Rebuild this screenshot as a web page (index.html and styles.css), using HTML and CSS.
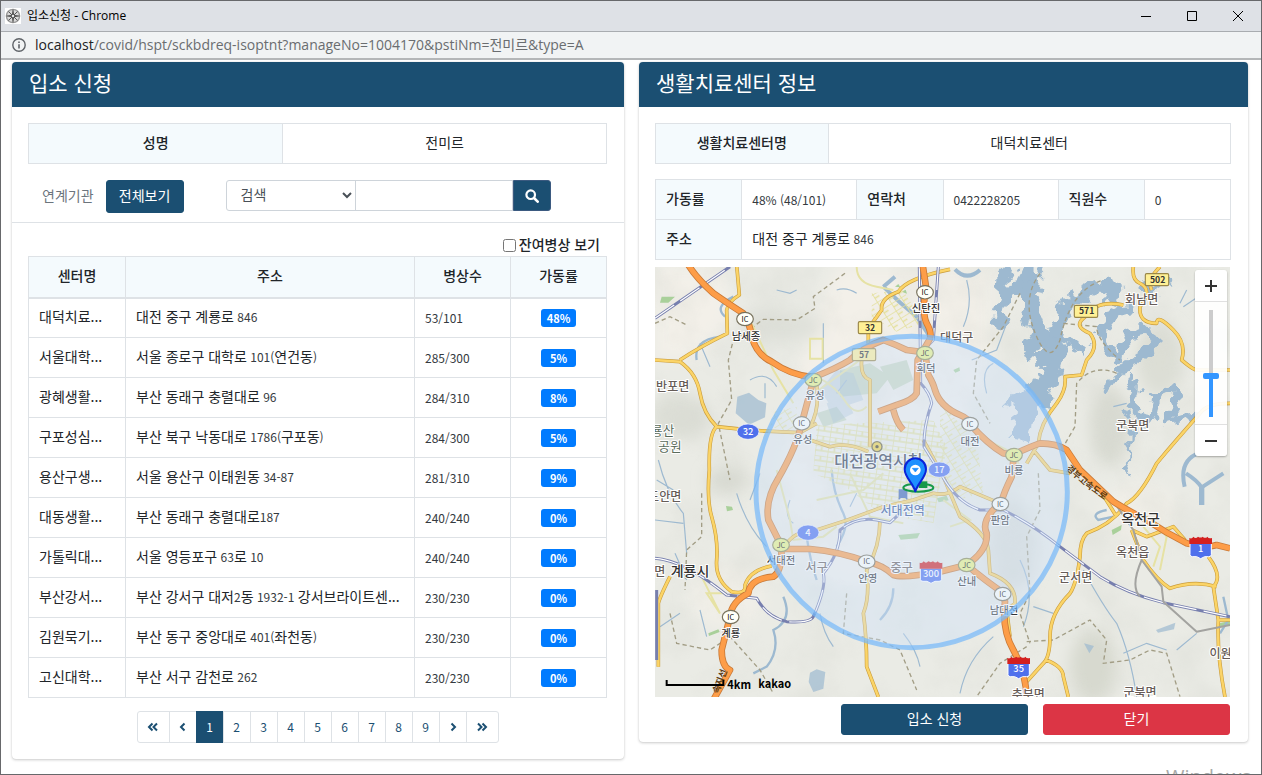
FILE: index.html
```html
<!DOCTYPE html>
<html lang="ko">
<head>
<meta charset="utf-8">
<meta name="viewport" content="width=device-width, initial-scale=1">
<title>입소신청</title>
<link rel="stylesheet" href="styles.css">
</head>
<body>
<div class="window">
  <header class="titlebar">
    <svg class="favicon" viewBox="0 0 16 16" aria-hidden="true">
      <rect width="16" height="16" fill="#fff"/>
      <circle cx="8" cy="8" r="6.600" fill="#d9d9d9" stroke="#9a9a9a" stroke-width="1.400"/>
      <path d="M8 1.500v13M1.500 8h13M3.500 3.500l9 9M12.500 3.500l-9 9" stroke="#555" stroke-width="1"/>
      <path d="M8 2l1.300 4.700L14 8 9.300 9.300 8 14 6.700 9.300 2 8l4.700-1.300z" fill="#555"/>
      <circle cx="8" cy="8" r="1.200" fill="#eee"/>
    </svg>
    <span class="window-title">입소신청 - Chrome</span>
    <div class="window-controls">
      <button type="button" aria-label="최소화"><svg viewBox="0 0 12 12"><path d="M1 6.500h10"/></svg></button>
      <button type="button" aria-label="최대화"><svg viewBox="0 0 12 12"><path d="M1.500 1.500h9v9h-9z"/></svg></button>
      <button type="button" aria-label="창 닫기"><svg viewBox="0 0 12 12"><path d="M1 1l10 10M11 1L1 11"/></svg></button>
    </div>
  </header>
  <div class="addressbar">
    <svg class="info-icon" viewBox="0 0 14 14" aria-hidden="true"><circle cx="7" cy="7" r="6.200" fill="none" stroke="#5f6368" stroke-width="1.400"/><path d="M7 6.200v4.300M7 3.500v1.600" stroke="#5f6368" stroke-width="1.600"/></svg>
    <span class="url"><span class="url-host">localhost</span>/covid/hspt/sckbdreq-isoptnt?manageNo=1004170&amp;pstiNm=전미르&amp;type=A</span>
  </div>

  <main class="content">
    <section class="card">
      <h1 class="card-header">입소 신청</h1>
      <div class="card-body">
        <table class="table person-table">
          <tr><th scope="row">성명</th><td>전미르</td></tr>
        </table>
        <form class="filter">
          <span class="filter-label">연계기관</span>
          <button type="button" class="btn btn-primary">전체보기</button>
          <div class="search-group">
            <select aria-label="검색 조건"><option>검색</option></select>
            <input type="text" aria-label="검색어">
            <button type="button" class="btn-search" aria-label="검색"><svg viewBox="0 0 14 14"><circle cx="5.700" cy="5.700" r="4.300" fill="none" stroke="#fff" stroke-width="2.200"/><path d="M9 9l3.700 3.700" stroke="#fff" stroke-width="2.600" stroke-linecap="round"/></svg></button>
          </div>
        </form>
      </div>
      <div class="card-body list-body">
        <label class="remain"><input type="checkbox"><span>잔여병상 보기</span></label>
        <table class="table list-table">
          <colgroup><col class="c-name"><col class="c-addr"><col class="c-bed"><col class="c-rate"></colgroup>
          <thead><tr><th>센터명</th><th>주소</th><th>병상수</th><th>가동률</th></tr></thead>
          <tbody>
            <tr><td>대덕치료...</td><td>대전 중구 계룡로<span class="num"> 846</span></td><td class="num">53/101</td><td><span class="badge">48%</span></td></tr>
            <tr><td>서울대학...</td><td>서울 종로구 대학로<span class="num"> 101(</span>연건동<span class="num">)</span></td><td class="num">285/300</td><td><span class="badge">5%</span></td></tr>
            <tr><td>광혜생활...</td><td>부산 동래구 충렬대로<span class="num"> 96</span></td><td class="num">284/310</td><td><span class="badge">8%</span></td></tr>
            <tr><td>구포성심...</td><td>부산 북구 낙동대로<span class="num"> 1786(</span>구포동<span class="num">)</span></td><td class="num">284/300</td><td><span class="badge">5%</span></td></tr>
            <tr><td>용산구생...</td><td>서울 용산구 이태원동<span class="num"> 34-87</span></td><td class="num">281/310</td><td><span class="badge">9%</span></td></tr>
            <tr><td>대동생활...</td><td>부산 동래구 충렬대로<span class="num">187</span></td><td class="num">240/240</td><td><span class="badge">0%</span></td></tr>
            <tr><td>가톨릭대...</td><td>서울 영등포구<span class="num"> 63</span>로<span class="num"> 10</span></td><td class="num">240/240</td><td><span class="badge">0%</span></td></tr>
            <tr><td>부산강서...</td><td>부산 강서구 대저<span class="num">2</span>동<span class="num"> 1932-1 </span>강서브라이트센...</td><td class="num">230/230</td><td><span class="badge">0%</span></td></tr>
            <tr><td>김원묵기...</td><td>부산 동구 중앙대로<span class="num"> 401(</span>좌천동<span class="num">)</span></td><td class="num">230/230</td><td><span class="badge">0%</span></td></tr>
            <tr><td>고신대학...</td><td>부산 서구 감천로<span class="num"> 262</span></td><td class="num">230/230</td><td><span class="badge">0%</span></td></tr>
          </tbody>
        </table>
        <nav class="pagination" aria-label="페이지">
          <a href="#" class="edge" aria-label="처음"><svg viewBox="0 0 12 10"><path d="M5.500 1.500L2 5l3.500 3.500M10 1.500L6.500 5 10 8.500"/></svg></a>
          <a href="#" aria-label="이전"><svg viewBox="0 0 12 10"><path d="M7.500 1.500L4 5l3.500 3.500"/></svg></a>
          <a href="#" class="active" aria-current="page">1</a><a href="#">2</a><a href="#">3</a><a href="#">4</a><a href="#">5</a><a href="#">6</a><a href="#">7</a><a href="#">8</a><a href="#">9</a>
          <a href="#" aria-label="다음"><svg viewBox="0 0 12 10"><path d="M4.500 1.500L8 5 4.500 8.500"/></svg></a>
          <a href="#" class="edge" aria-label="마지막"><svg viewBox="0 0 12 10"><path d="M2 1.500L5.500 5 2 8.500M6.500 1.500L10 5 6.500 8.500"/></svg></a>
        </nav>
      </div>
    </section>

    <section class="card">
      <h1 class="card-header">생활치료센터 정보</h1>
      <div class="card-body info-body">
        <table class="table center-table">
          <tr><th scope="row">생활치료센터명</th><td>대덕치료센터</td></tr>
        </table>
        <table class="table detail-table">
          <colgroup><col class="d15"><col class="d20"><col class="d15"><col class="d20"><col class="d15"><col class="d15"></colgroup>
          <tr><th>가동률</th><td class="num">48% (48/101)</td><th>연락처</th><td class="num">0422228205</td><th>직원수</th><td class="num">0</td></tr>
          <tr><th>주소</th><td colspan="5">대전 중구 계룡로<span class="num"> 846</span></td></tr>
        </table>

        <div class="map">
          <svg class="map-canvas" viewBox="15 21 1725 1290" preserveAspectRatio="xMidYMid slice" role="img" aria-label="대전 지도">
            <defs>
              <filter id="soft" x="-30%" y="-30%" width="160%" height="160%"><feGaussianBlur stdDeviation="22"/></filter>
              <filter id="shore" x="-10%" y="-10%" width="120%" height="120%" color-interpolation-filters="sRGB"><feTurbulence type="fractalNoise" baseFrequency="0.03" numOctaves="2" seed="7"/><feDisplacementMap in="SourceGraphic" scale="58" xChannelSelector="R" yChannelSelector="G"/></filter>
              <filter id="relief" x="0" y="0" width="100%" height="100%"><feTurbulence type="fractalNoise" baseFrequency="0.007" numOctaves="4" seed="12"/><feColorMatrix values="0 0 0 0 .68  0 0 0 0 .69  0 0 0 0 .64  1.8 0 0 0 -.72"/></filter>
              <pattern id="grid" width="38" height="30" patternUnits="userSpaceOnUse" patternTransform="rotate(8)"><path d="M0 0H38M0 0V30M19 0V15M0 15H38" stroke="#e4e09c" stroke-width="5" fill="none"/></pattern>
              <pattern id="gridTilt" width="34" height="26" patternUnits="userSpaceOnUse" patternTransform="rotate(-32)"><path d="M0 0H34M0 0V26M0 13H17" stroke="#e4e09c" stroke-width="5" fill="none"/></pattern>
              <g id="ic"><ellipse rx="25" ry="20" fill="#fffff8" stroke="#77715c" stroke-width="3.500"/><text y="8" font-size="22">IC</text></g>
              <g id="jc"><ellipse rx="25" ry="20" fill="#eaf382" stroke="#8a8a52" stroke-width="3.500"/><text y="8" font-size="22">JC</text></g>
              <g id="plate"><rect x="-35" y="-18" width="70" height="36" rx="4" fill="#fff095" stroke="#9a8748" stroke-width="3.500"/></g>
              <g id="oval"><ellipse rx="33" ry="23" fill="#4f70ec" stroke="#fff" stroke-width="2"/></g>
              <g id="shield"><path d="M-32-12h64v34q0 6-8 6H12L0 34l-12-6h-12q-8 0-8-6z" fill="#4f70ec" stroke="#fff" stroke-width="3"/><path d="M-34-10v-18q8 4 12-4 7 8 14 0 8 5 14 0 8 7 14 0 4 7 14 4v18z" fill="#d3201f"/></g>
              <path id="expressway-a" d="M1247 627L1299 674 1385 736"/>
              <path id="expressway-b" d="M205 1302L238 1215"/>
            </defs>
            <rect x="15" y="21" width="1725" height="1290" fill="#eaebe5"/>
            <g filter="url(#soft)">
              <path d="M15 21h200l30 150-100 120L15 300zM560 21h460v330l-260 400-380 10 60-420z" fill="#f3f0e9"/>
              <ellipse cx="620" cy="800" rx="200" ry="180" fill="#f3f0e9"/>
              <ellipse cx="1470" cy="760" rx="110" ry="90" fill="#f1efe8"/>
              <ellipse cx="230" cy="1010" rx="110" ry="90" fill="#f1efe8"/>
              <ellipse cx="1380" cy="500" rx="60" ry="120" fill="#d8dad1"/>
              <ellipse cx="1530" cy="300" rx="70" ry="110" fill="#dcded5"/>
              <ellipse cx="90" cy="470" rx="90" ry="70" fill="#dcded6"/>
              <ellipse cx="1330" cy="1220" rx="70" ry="110" fill="#d7d9cf"/>
              <ellipse cx="400" cy="200" rx="120" ry="50" fill="#dfe1da"/>
              <ellipse cx="1090" cy="860" rx="70" ry="130" fill="#dcded7"/>
              <ellipse cx="230" cy="660" rx="60" ry="40" fill="#d8dad2"/>
            </g>
            <rect x="15" y="21" width="1725" height="1290" filter="url(#relief)" opacity=".4"/>

            <g fill="#bccfb0">
              <path d="M570 330l90-20 60 40-40 50-110 10zM690 320l80-20 20 60-60 30zM500 460l60-20 30 40-70 20z" opacity=".7"/>
            </g>
            <g fill="#a9d09a">
              <path d="M35 110l40 0-20 18-25 0zM228 738l18 2 3 10-18 4zM175 1120l30-12 4 8-32 12zM1385 810l30-15-2 15-25 15zM745 825l65-6-8 16-50 4zM910 330l18-8 2 10-14 6zM1708 1090l32-8v14l-30 4zM860 715l30-8 6 14-30 6zM735 80l10-8 6 10zM755 95l12-6 4 12z"/>
            </g>

            <g fill="none" stroke="#9db9d0" stroke-linejoin="round" filter="url(#shore)">
              <path stroke-width="32" d="M1090 20Q1030 60 1070 95L1050 165 1056 205M1040 90L1160 70"/>
              <path stroke-width="56" d="M1160 20Q1110 70 1150 150 1160 220 1205 280"/>
              <path stroke-width="34" d="M1120 60L1095 110M1165 230L1130 290M1180 330L1220 280"/>
              <path stroke-width="44" d="M1212 270Q1225 140 1295 100 1360 60 1395 95L1385 140"/>
              <path stroke-width="56" d="M1225 240L1210 330Q1180 390 1130 430L1115 540"/>
              <path stroke-width="66" d="M1185 380Q1145 400 1120 460"/>
              <path stroke-width="26" d="M1235 235L1315 270M1130 390L1070 440M1180 430L1210 410M1130 290L1210 295"/>
              <path stroke-width="28" d="M1450 145Q1350 155 1358 230 1370 280 1415 295 1420 220 1470 215 1520 208 1510 250 1470 300 1400 340"/>
              <path stroke-width="20" d="M1400 340L1360 400M1430 350Q1470 370 1450 410 1430 440 1470 470 1510 490 1510 460 1520 400 1560 385 1590 390 1580 430L1550 480 1640 465M1530 420L1500 400"/>
              <path stroke-width="9" d="M1420 440Q1470 520 1430 560 1460 600 1420 640"/>
              <path stroke-width="16" d="M1480 70L1500 100 1560 60"/>
            </g>
            <g fill="#9db9d0">
              <path d="M262 410l35-12 28 22 24 10-4 42-48 22-40-34z" opacity=".7"/>
              <path d="M1518 1110l58-22-4 20-48 10zM480 1238l20-10 26 8-6 50-30 10-14-30zM1302 1150l30 8-14 22z" opacity=".7"/>
              <path d="M560 330l50 10 30 80-90 30-40-60zM530 430l60-20 20 50-60 30z" opacity=".4"/>
            </g>
            <g fill="none" stroke="#9db9d0">
              <path stroke-width="12" d="M700 80Q750 130 800 170L836 225M735 50L700 80M915 28Q950 65 990 30M1608 640Q1640 660 1655 682L1720 640M1604 680Q1585 600 1650 578L1700 570"/>
              <path stroke-width="16" d="M1655 680V735"/>
              <path stroke-width="7" d="M250 110Q190 140 225 170M400 1010Q430 1080 370 1110 390 1170 350 1220L310 1240M470 830Q480 900 500 960M545 630Q550 700 580 760 600 800 560 860M730 985Q730 1040 690 1080M1370 750Q1320 760 1345 780L1390 770M1720 1010L1735 1080 1710 1120M140 300Q130 240 210 230"/>
              <path stroke-width="3.500" d="M25 600Q50 700 100 760L110 880M15 780L100 790M20 660L70 690M260 700Q290 800 350 860M380 90L420 100 440 90M560 90Q590 80 620 100M300 360Q350 330 380 380M345 370V415M520 190V310M75 880L110 960M950 60Q970 130 940 200M965 300L1040 270 1070 190M1010 400Q990 330 1030 310M1390 440L1430 430M1110 900Q1160 1000 1120 1100M1300 930Q1360 1040 1400 1090 1440 1180 1460 1310M1150 1040L1210 1060M1030 1130Q950 1200 930 1300M1420 1180L1490 1150 1550 1170M330 640L300 720M420 720Q400 770 430 790M510 1060Q520 1120 550 1160M760 1120Q800 1170 810 1220M150 1050L170 1130M30 1100L90 1060M1580 1170L1640 1120M590 360L560 400M180 320L150 250M620 700L600 740M1660 100L1600 140M1610 90L1590 130"/>
            </g>

            <g fill="none" stroke="#a29d85" stroke-width="4" stroke-dasharray="13 9">
              <path d="M585 40L490 110 495 145 440 180 340 178 310 200 250 240 235 300 245 420 205 490 240 660M15 190L60 170 110 195"/>
              <path d="M1170 40Q1110 120 1160 230 1200 320 1230 240 1260 90 1360 60M1240 190L1340 200Q1340 240 1410 300M1400 340Q1330 310 1280 370L1275 500 1240 560M1110 100L1060 200 980 300 970 400 1020 490"/>
              <path d="M155 700V830L110 870 105 990M60 1060L80 1150 180 1170 240 1130 330 1230 370 1300M590 1000L580 1120 690 1140 750 1170 800 1290M1165 640L1170 750 1130 830 1140 1000 1110 1060 1140 1150M1130 1145L1210 1140 1320 1080 1370 1140 1360 1210 1440 1200 1500 1170 1550 1180 1590 1310M1130 1160L1050 1210 980 1310"/>
            </g>

            <path d="M500 495L850 480 890 560 850 790 690 760 600 690 490 640z" fill="url(#grid)"/>
            <path d="M665 100L760 90 820 190 740 215 665 170z" fill="url(#gridTilt)"/>
            <path d="M375 455L440 440 440 520 360 500zM870 430L980 540 1000 700 920 720 870 640z" fill="url(#gridTilt)"/>
            <g fill="none" stroke="#e6e2a4" stroke-width="6">
              <path d="M480 236h38v60h-38zM620 20Q620 70 680 80L730 90M305 190L370 330 430 430M500 350Q560 380 590 430 620 470 650 440M630 300L520 380 470 420M380 630L420 780 430 840 520 830 560 800M150 940L210 1060 170 1000 230 1000M500 720L640 690 700 640M600 640L660 770 760 790M880 720L960 780 900 800M1480 800L1530 860 1510 920M1520 790L1550 830 1530 930M1010 540L1090 580 1110 620"/>
            </g>

            <g fill="none" stroke-linejoin="round">
              <path stroke="#c99c3c" stroke-width="11" d="M260 15L268 105Q235 125 230 150L232 220Q150 260 90 300M15 300L90 305Q140 340 150 400 160 460 200 500 330 515 450 518L500 490M200 500Q175 520 178 630 170 720 185 770 205 840 200 900 195 960 245 995 290 1005 285 975 300 930 365 918M900 28Q770 55 745 95 690 115 695 150L655 205V255M635 300Q630 350 660 360V560M655 575Q590 545 540 560L480 540M500 370Q510 450 480 500M1450 20Q1445 60 1470 70 1510 90 1470 140 1465 190 1520 190 1520 160 1570 210 1610 250 1595 300 1630 330 1640 330H1740M1530 20Q1490 60 1505 90M1420 135Q1370 125 1340 140L1300 175Q1270 200 1320 220 1350 260 1310 300L1295 345 1245 350Q1250 390 1220 430 1170 490 1165 550L1130 610M1740 430Q1670 430 1650 460 1570 550 1520 610 1470 710 1430 730 1390 790 1310 820 1290 840 1290 890 1280 970 1260 1000 1200 1060 1200 1130 1200 1190 1180 1210L1130 1265M1188 1200Q1240 1220 1240 1250L1255 1311M1445 810L1480 900Q1520 960 1560 985 1630 960 1700 980M1675 890Q1720 950 1690 980L1705 1080Q1700 1180 1725 1311M1445 810L1490 830 1570 800 1605 840M1350 690L1400 770M60 950Q30 1010 25 1030V1220M410 850Q440 810 500 810 600 780 700 740L790 720 850 700Q890 710 930 680L1050 730M690 780Q690 860 650 930 660 1010 640 1060 650 1130 650 1220L685 1311M820 540L880 650 930 770Q1010 820 1015 870L1020 940Q1100 970 1095 1030L1070 1050 1080 1130M1150 570L1200 630 1260 640M1705 1080H1740"/>
              <path stroke="#fbd467" stroke-width="7.500" d="M260 15L268 105Q235 125 230 150L232 220Q150 260 90 300M15 300L90 305Q140 340 150 400 160 460 200 500 330 515 450 518L500 490M200 500Q175 520 178 630 170 720 185 770 205 840 200 900 195 960 245 995 290 1005 285 975 300 930 365 918M900 28Q770 55 745 95 690 115 695 150L655 205V255M635 300Q630 350 660 360V560M655 575Q590 545 540 560L480 540M500 370Q510 450 480 500M1450 20Q1445 60 1470 70 1510 90 1470 140 1465 190 1520 190 1520 160 1570 210 1610 250 1595 300 1630 330 1640 330H1740M1530 20Q1490 60 1505 90M1420 135Q1370 125 1340 140L1300 175Q1270 200 1320 220 1350 260 1310 300L1295 345 1245 350Q1250 390 1220 430 1170 490 1165 550L1130 610M1740 430Q1670 430 1650 460 1570 550 1520 610 1470 710 1430 730 1390 790 1310 820 1290 840 1290 890 1280 970 1260 1000 1200 1060 1200 1130 1200 1190 1180 1210L1130 1265M1188 1200Q1240 1220 1240 1250L1255 1311M1445 810L1480 900Q1520 960 1560 985 1630 960 1700 980M1675 890Q1720 950 1690 980L1705 1080Q1700 1180 1725 1311M1445 810L1490 830 1570 800 1605 840M1350 690L1400 770M60 950Q30 1010 25 1030V1220M410 850Q440 810 500 810 600 780 700 740L790 720 850 700Q890 710 930 680L1050 730M690 780Q690 860 650 930 660 1010 640 1060 650 1130 650 1220L685 1311M820 540L880 650 930 770Q1010 820 1015 870L1020 940Q1100 970 1095 1030L1070 1050 1080 1130M1150 570L1200 630 1260 640M1705 1080H1740"/>
              <path stroke="#777fae" stroke-width="9" d="M15 175L240 20M808 20L812 370Q840 400 845 430 820 500 822 560L890 670Q930 730 990 750H1060Q1150 795 1230 860L1350 950Q1430 1000 1540 1028L1740 1070M865 20L850 240 812 280M15 895Q100 900 230 1005L320 1015Q350 1070 410 1085 480 1090 490 1070 530 980 520 940 570 880 570 810 620 770 680 780L720 788 750 760M20 990V1200"/>
              <path stroke="#fff" stroke-width="3.500" stroke-dasharray="70 22" d="M15 175L240 20M808 20L812 370Q840 400 845 430 820 500 822 560L890 670Q930 730 990 750H1060Q1150 795 1230 860L1350 950Q1430 1000 1540 1028L1740 1070M865 20L850 240 812 280M15 895Q100 900 230 1005L320 1015Q350 1070 410 1085 480 1090 490 1070 530 980 520 940 570 880 570 810 620 770 680 780L720 788 750 760"/>
              <path stroke="#a3a3a0" stroke-width="6" d="M1395 730L1450 810 1475 900Q1440 980 1470 1010M1475 900L1535 980 1540 1025 1640 1115 1740 1095"/>
              <path stroke="#c97a38" stroke-width="20" d="M115 15Q140 55 190 100 240 135 280 160 300 190 305 230 320 285 365 305 420 345 490 352 560 325 600 300 640 262 700 240 740 255 770 270L825 277M818 15L828 80Q815 160 830 190 850 225 835 245L803 300 800 400Q790 420 740 435L685 455M730 450Q740 490 760 510M825 277L835 345Q850 370 855 390 870 440 930 465 955 475 960 492 1010 550 1060 580L1092 583Q1140 560 1170 550 1220 550 1250 570L1290 630 1390 725Q1430 750 1490 780 1550 820 1610 850 1670 865 1700 855L1740 865M490 360L455 490Q440 560 385 655 345 720 355 780L393 855Q400 930 370 950 300 955 295 1000 245 1025 240 1070 230 1110 215 1170 215 1220 240 1230L190 1320M1092 583L1085 650Q1060 700 1055 725 990 780 1010 820 1015 870 950 915L870 935Q760 955 730 945 700 915 650 905 570 875 480 867H393M950 915Q1010 965 1055 995L1065 1025Q1055 1110 1090 1170 1125 1230 1132 1320"/>
              <path stroke="#fd9d48" stroke-width="15" d="M115 15Q140 55 190 100 240 135 280 160 300 190 305 230 320 285 365 305 420 345 490 352 560 325 600 300 640 262 700 240 740 255 770 270L825 277M818 15L828 80Q815 160 830 190 850 225 835 245L803 300 800 400Q790 420 740 435L685 455M730 450Q740 490 760 510M825 277L835 345Q850 370 855 390 870 440 930 465 955 475 960 492 1010 550 1060 580L1092 583Q1140 560 1170 550 1220 550 1250 570L1290 630 1390 725Q1430 750 1490 780 1550 820 1610 850 1670 865 1700 855L1740 865M490 360L455 490Q440 560 385 655 345 720 355 780L393 855Q400 930 370 950 300 955 295 1000 245 1025 240 1070 230 1110 215 1170 215 1220 240 1230L190 1320M1092 583L1085 650Q1060 700 1055 725 990 780 1010 820 1015 870 950 915L870 935Q760 955 730 945 700 915 650 905 570 875 480 867H393M950 915Q1010 965 1055 995L1065 1025Q1055 1110 1090 1170 1125 1230 1132 1320"/>
            </g>

            <g class="map-badges">
              <use href="#ic" x="825" y="97"/><use href="#ic" x="285" y="177"/><use href="#jc" x="490" y="360"/><use href="#jc" x="825" y="279"/>
              <use href="#ic" x="455" y="490"/><use href="#ic" x="960" y="492"/><use href="#jc" x="1092" y="585"/><use href="#ic" x="242" y="1071"/>
              <use href="#jc" x="393" y="855"/><use href="#ic" x="650" y="905"/><use href="#ic" x="1051" y="732"/><use href="#jc" x="950" y="915"/><use href="#ic" x="1058" y="1002"/>
              <use href="#plate" x="660" y="203"/><use href="#plate" x="642" y="284"/><use href="#plate" x="1308" y="154"/><use href="#plate" x="1521" y="59"/>
              <g class="plate-text"><text x="660" y="213">32</text><text x="642" y="294">57</text><text x="1310" y="163">571</text><text x="1523" y="69">502</text></g>
              <use href="#oval" x="294" y="515"/><use href="#oval" x="868" y="629"/><use href="#oval" x="474" y="818"/>
              <use href="#shield" x="843" y="936"/><use href="#shield" x="1652" y="862"/><use href="#shield" x="1106" y="1222"/>
              <g class="route-text"><text x="294" y="525">32</text><text x="868" y="640">17</text><text x="474" y="829">4</text><text x="843" y="951">300</text><text x="1652" y="877">1</text><text x="1106" y="1236">35</text></g>
              <circle cx="681" cy="560" r="15" fill="#f0d040" stroke="#665f3a" stroke-width="4"/><circle cx="681" cy="560" r="5" fill="#443d22"/>
              <path d="M748 690h22v22h-22zM746 718l6-6M772 718l-6-6" fill="#4468b4" stroke="#4468b4" stroke-width="4"/>
            </g>
            <g class="places">
              <g class="place-ramp">
                <text x="828" y="157">신탄진</text><text x="288" y="239">남세종</text><text x="495" y="418">유성</text><text x="828" y="336">회덕</text><text x="458" y="550">유성</text>
                <text x="960" y="554">대전</text><text x="1092" y="643">비룡</text><text x="242" y="1132">계룡</text><text x="393" y="913">서대전</text><text x="653" y="966">안영</text>
                <text x="1051" y="793">판암</text><text x="950" y="974">산내</text><text x="1062" y="1063">남대전</text>
              </g>
              <g class="place-town">
                <text x="68" y="392">반포면</text><text x="920" y="247">대덕구</text><text x="1475" y="131">회남면</text><text x="1448" y="509">군북면</text><text x="44" y="722">도안면</text><text x="29" y="948">면</text>
                <text x="500" y="935">서구</text><text x="755" y="935">중구</text><text x="1448" y="891">옥천읍</text><text x="1277" y="967">군서면</text><text x="1135" y="1317">추부면</text><text x="1470" y="1312">군북면</text><text x="1728" y="1194">이원면</text>
              </g>
              <text class="place-station" x="758" y="764">서대전역</text>
              <g class="place-park"><text x="38" y="524">룡산</text><text x="60" y="574">공원</text></g>
              <g class="place-city"><text x="120" y="949">계룡시</text><text x="1472" y="792">옥천군</text></g>
              <text class="place-metro" x="685" y="621">대전광역시청</text>
              <text class="road-name"><textPath href="#expressway-a">경부고속도로</textPath></text>
              <text class="road-name"><textPath href="#expressway-b">속지선</textPath></text>
            </g>

            <circle cx="785" cy="696" r="467" fill="#cfe3fa" fill-opacity=".42" stroke="#75b8fa" stroke-opacity=".7" stroke-width="15"/>
            <ellipse cx="805" cy="683" rx="45" ry="12" fill="none" stroke="#17994a" stroke-width="6"/>
            <path d="M806 664h26v20h-26z" fill="#17994a"/>
            <path d="M796 694C788 668 764 652 764 628a32 33 0 0 1 64 0c0 24-24 40-32 66z" fill="#1e90ff" stroke="#0b24d8" stroke-width="6" stroke-linejoin="round"/>
            <circle cx="796" cy="630" r="16" fill="#fff"/><path d="M787 625h18l-9 11z" fill="#1e90ff" stroke="#1e90ff" stroke-width="2" stroke-linejoin="round"/>
            <path d="M50 1260v15h170v-15" fill="none" stroke="#000" stroke-width="6"/>
            <text class="scale-text" x="232" y="1286">4km</text><text class="scale-text" x="325" y="1283">kakao</text>
          </svg>
          <div class="zoom-control">
            <button type="button" aria-label="확대"><svg viewBox="0 0 12 12"><path d="M0 6h12M6 0v12"/></svg></button>
            <div class="zoom-slider"><input type="range" min="0" max="100" value="38" aria-label="지도 배율"></div>
            <button type="button" aria-label="축소"><svg viewBox="0 0 12 12"><path d="M0 6h12"/></svg></button>
          </div>
        </div>
        <div class="actions">
          <button type="button" class="btn btn-primary">입소 신청</button>
          <button type="button" class="btn btn-danger">닫기</button>
        </div>
      </div>
    </section>
  </main>
  <div class="watermark" aria-hidden="true">Windows</div>
</div>
</body>
</html>
```

FILE: styles.css
```css
* { box-sizing: border-box; }

body {
  margin: 0;
  background: #fff;
  color: #212529;
  font: 14px/20px "Noto Sans CJK KR", sans-serif;
}

button, input, select { font: inherit; }
button { cursor: pointer; }

.window {
  position: relative;
  display: flex;
  flex-direction: column;
  min-height: 100vh;
  border: 1px solid #67686b;
  overflow: hidden;
}

/* browser chrome */
.titlebar {
  display: flex;
  align-items: center;
  height: 31px;
  padding-left: 4px;
  gap: 6px;
  background: #dee1e6;
  border-bottom: 1px solid #a9acb0;
  color: #000;
}
.favicon { width: 16px; height: 16px; }
.window-title { font: 12px/18px "Open Sans", "Noto Sans CJK KR", sans-serif; }
.window-controls { display: flex; margin-left: auto; }
.window-controls button {
  display: grid;
  place-items: center;
  width: 46px;
  height: 30px;
  padding: 0;
  border: 0;
  background: none;
}
.window-controls svg { width: 12px; height: 12px; fill: none; stroke: #000; stroke-width: 1; }
.addressbar {
  display: flex;
  align-items: center;
  height: 28px;
  padding-left: 11px;
  gap: 9px;
  background: #f1f3f4;
  border-bottom: 2px solid #b4b6b8;
  color: #6a6d70;
}
.info-icon { width: 14px; height: 14px; }
.url { font: 14px/20px "Open Sans", "Noto Sans CJK KR", sans-serif; white-space: nowrap; }
.url-host { color: #202124; }

/* page */
.content {
  display: grid;
  grid-template-columns: minmax(0, 612fr) minmax(0, 609fr);
  gap: 15px;
  align-items: start;
  padding: 2px 13px 14px 11px;
}
.card {
  border-radius: 4px;
  background: #fff;
  box-shadow: 0 0 1px rgba(0, 0, 0, .13), 0 1px 3px rgba(0, 0, 0, .2);
}
.card-header {
  margin: 0;
  padding: 5px 17px 10px;
  border-radius: 4px 4px 0 0;
  background: #1b4f72;
  color: #fff;
  font-size: 21px;
  line-height: 30px;
  font-weight: 400;
}
.card-body { padding: 16px 17px 9px 16px; }
.list-body { padding: 12px 17px 16px 16px; border-top: 1px solid #dee2e6; }
.info-body { padding-bottom: 7px; }

.table {
  width: 100%;
  border-collapse: collapse;
  table-layout: fixed;
}
.table th, .table td {
  height: 40px;
  padding: 0 10px 3px;
  border: 1px solid #dee2e6;
}
.table th { background: #f4fafd; font-weight: 500; }
.person-table th { width: 44%; }
.center-table th { width: 30%; }
.person-table td, .center-table td { text-align: center; }

.table .num { font-size: 12px; color: #343a40; }
.table td.num { padding-bottom: 0; }

.filter {
  display: flex;
  align-items: flex-start;
  padding: 16px 0 0 14px;
}
.filter-label { padding: 5px 12px 0 0; color: #6c757d; }
.btn {
  border: 1px solid transparent;
  border-radius: 3px;
  color: #fff;
  text-align: center;
}
.btn-primary { background: #1b4f72; border-color: #1b4f72; }
.btn-danger { background: #dc3545; border-color: #dc3545; }
.filter .btn { width: 78px; height: 33px; padding: 0 0 3px; }
.search-group { display: flex; height: 31px; margin-left: 42px; }
.search-group select {
  width: 130px;
  padding: 0 0 3px 10px;
  border: 1px solid #ced4da;
  border-radius: 3px 0 0 3px;
  background: #fff;
  color: #495057;
}
.search-group input {
  width: 158px;
  margin-left: -1px;
  border: 1px solid #ced4da;
  border-radius: 0;
}
.btn-search {
  display: grid;
  place-items: center;
  width: 38px;
  padding: 0;
  border: 1px solid #3b5a80;
  border-radius: 0 3px 3px 0;
  background: #1b4f72;
}
.btn-search svg { width: 14px; height: 14px; }

.remain {
  display: flex;
  justify-content: flex-end;
  align-items: center;
  gap: 3px;
  height: 21px;
  padding-right: 7px;
  font-weight: 500;
}
.remain span { padding-bottom: 3px; }
.remain input { width: 13px; height: 13px; margin: 0 0 1px; }

.c-name { width: 97px; }
.c-bed, .c-rate { width: 96px; }
.list-table thead th { height: 41px; border-bottom-width: 2px; }
.list-table td { overflow: hidden; white-space: nowrap; }
.list-table td:last-child { text-align: center; }
.badge {
  display: inline-block;
  width: 35px;
  height: 18px;
  border-radius: 3px;
  background: #007bff;
  color: #fff;
  font-size: 11px;
  line-height: 18px;
  font-weight: 700;
  vertical-align: middle;
}

.pagination { display: flex; justify-content: center; padding-top: 13px; }
.pagination a {
  display: grid;
  place-items: center;
  width: 28px;
  height: 32px;
  margin-left: -1px;
  border: 1px solid #dee2e6;
  color: #1b4f72;
  font-size: 12px;
  text-decoration: none;
}
.pagination .edge { width: 33px; }
.pagination a:first-child { margin-left: 0; border-radius: 3px 0 0 3px; }
.pagination a:last-child { border-radius: 0 3px 3px 0; }
.pagination .active { background: #1b4f72; border-color: #1b4f72; color: #fff; }
.pagination svg { width: 12px; height: 10px; fill: none; stroke: #1b4f72; stroke-width: 2; }

.detail-table { margin: 15px 0 7px; }
.detail-table th { text-align: left; }
.d15 { width: 15%; }
.d20 { width: 20%; }

/* map */
.map { position: relative; height: 430px; margin-right: 1px; }
.map-canvas { display: block; width: 100%; height: 100%; }
.map-canvas text { font-family: "Noto Sans CJK KR", sans-serif; text-anchor: middle; }
.map-badges text { fill: #555; font-weight: 700; }
.map-badges .plate-text text { fill: #333; font-size: 26px; }
.map-badges .route-text text { fill: #fff; font-size: 28px; font-weight: 500; }
.places text { paint-order: stroke; stroke: #fff; stroke-width: 6px; stroke-linejoin: round; fill: #333; }
.places .place-ramp text { font-size: 31px; font-weight: 500; }
.places .place-town text { font-size: 36px; fill: #665c58; font-weight: 500; }
.places .place-park text { font-size: 38px; fill: #5b6c5c; }
.places .place-city text { font-size: 42px; font-weight: 500; }
.places .place-metro { font-size: 48px; fill: #33394a; font-weight: 500; }
.places .place-station { font-size: 36px; fill: #355291; font-weight: 500; }
.places .road-name { font-size: 27px; font-weight: 700; fill: #5c3a12; stroke: none; text-anchor: start; }
.map-canvas .scale-text { font-size: 33px; font-weight: 700; text-anchor: start; }

.zoom-control {
  position: absolute;
  top: 3px;
  right: 3px;
  display: flex;
  flex-direction: column;
  width: 32px;
  border-radius: 3px;
  overflow: hidden;
  box-shadow: 0 1px 2px rgba(0, 0, 0, .3);
}
.zoom-control button {
  display: grid;
  place-items: center;
  height: 31px;
  padding: 0;
  border: 0;
  background: #fff;
}
.zoom-control svg { width: 12px; height: 12px; stroke: #333; stroke-width: 2; }
.zoom-slider {
  display: flex;
  justify-content: center;
  height: 124px;
  padding: 8px 0;
  border: solid #e0e0e0;
  border-width: 1px 0;
  background: rgba(255, 255, 255, .92);
}
.zoom-slider input {
  width: 16px;
  height: 107px;
  margin: 0;
  appearance: none;
  background: linear-gradient(#ccc 61%, #3396ff 61%) center / 4px 100% no-repeat;
  writing-mode: vertical-lr;
  direction: rtl;
}
.zoom-slider input::-webkit-slider-thumb {
  appearance: none;
  width: 16px;
  height: 6px;
  border-radius: 2px;
  background: #3396ff;
}

.actions { display: flex; justify-content: flex-end; gap: 15px; padding: 7px 1px 0 0; }
.actions .btn { width: 187px; height: 31px; padding: 0 0 3px; }

.watermark {
  position: absolute;
  right: 10px;
  bottom: -17px;
  color: #a9a9a9;
  font: 20px/28px "Open Sans", sans-serif;
}
```
